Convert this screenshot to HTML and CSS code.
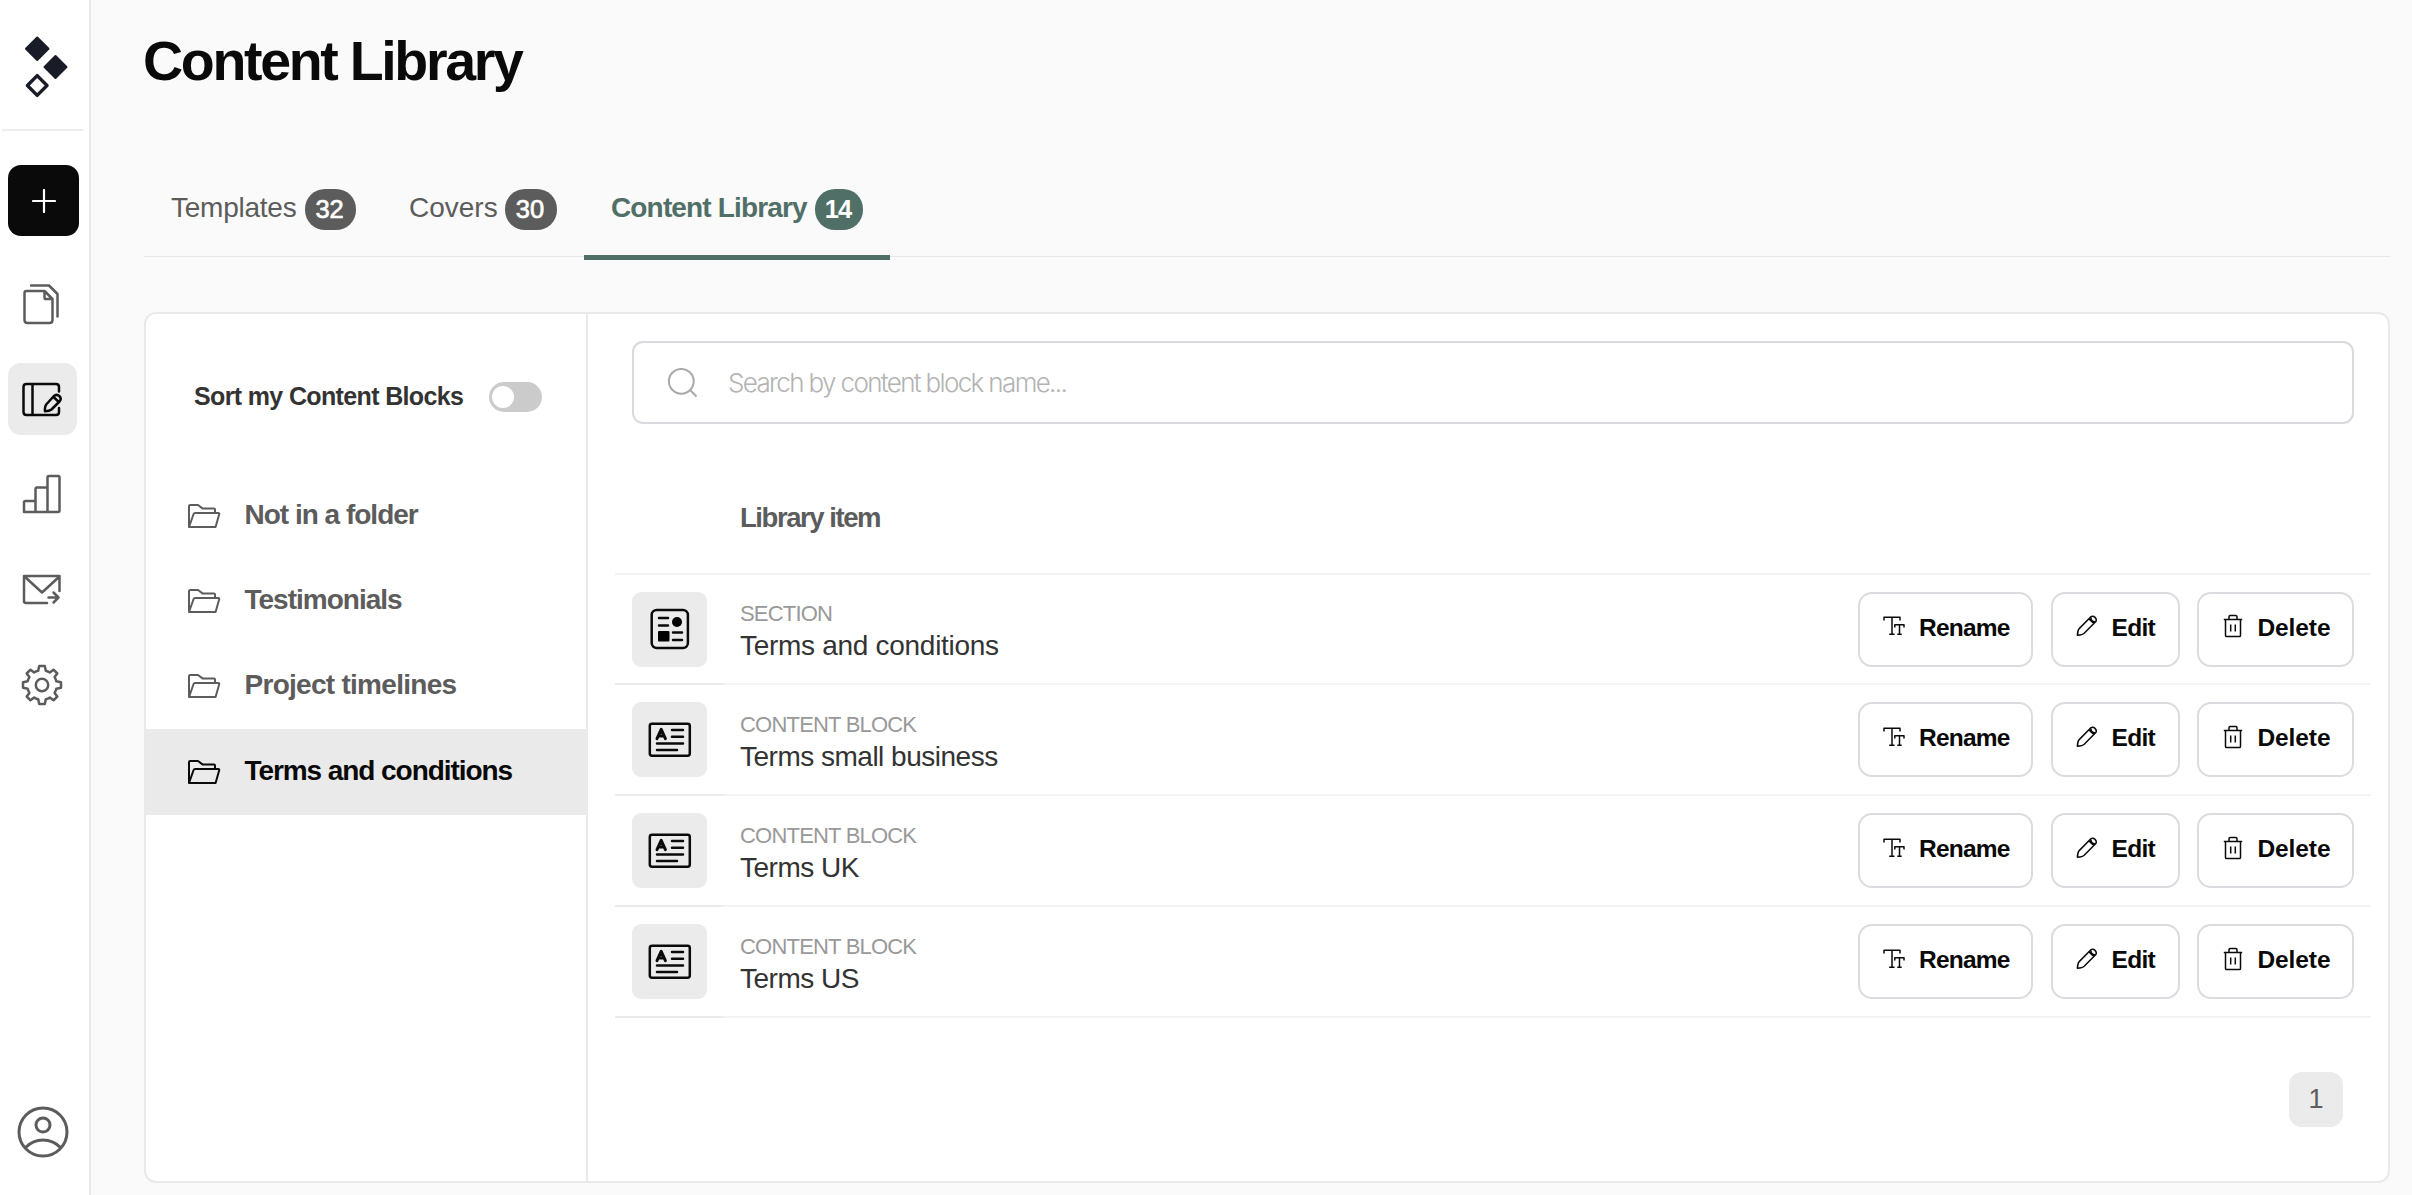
FILE: index.html
```html
<!DOCTYPE html>
<html lang="en">
<head>
<meta charset="utf-8">
<title>Content Library</title>
<link rel="stylesheet" href="styles.css">
</head>
<body>
<svg class="defs" aria-hidden="true">
  <symbol id="folder" viewBox="0 0 34 26"><path d="M2 24V3.2Q2 2 3.2 2H11L15.5 5.4H27Q28 5.4 28 6.4V10M2 24L6.6 11Q7 10 8 10H31.2Q32.6 10 32.2 11.3L28.6 24Z"/></symbol>
  <symbol id="section" viewBox="0 0 40 42"><rect x="1.7" y="2" width="36.2" height="38" rx="5" fill="none" stroke="currentColor" stroke-width="2.5"/><path d="M9 10H18M9 17.5H18M23 24.5H32M23 32H32" fill="none" stroke="currentColor" stroke-width="2.5" stroke-linecap="round"/><circle cx="27" cy="14" r="5"/><rect x="8" y="23" width="11.5" height="10.6" rx="1"/></symbol>
  <symbol id="block" viewBox="0 0 44 36"><g fill="none" stroke="currentColor" stroke-width="2.5" stroke-linecap="round" stroke-linejoin="round"><rect x="1.8" y="1.8" width="40" height="32" rx="2.2"/><path d="M24 8H35M24 14.7H35M9 21.4H35M9 28.1H29"/><path d="M9 16.6L13.2 7.4L17.4 16.6M10.8 14H15.8" stroke-width="3"/></g></symbol>
  <symbol id="rename" viewBox="0 0 22 20"><path d="M1 4.5V1.2H17V4.5M9 1.2V18.2M6.2 18.2H11.5M11.8 11.5V8.8H21V11.5M16.5 8.8V18.2M14.3 18.2H18.7"/></symbol>
  <symbol id="pencil" viewBox="0 0 22 22"><path d="M14.4 2.2Q16.8 .2 19 2.4Q21.2 4.6 19.6 6.8L8.2 18.2Q6.5 19.8 1.4 20.2Q1.6 15.4 3.2 13.6ZM13 3.9L18 8.7M15 2.8Q14.8 6.4 19.2 7"/></symbol>
  <symbol id="trash" viewBox="0 0 20 24"><path d="M.8 5.4H19.2M2.5 5.4V21.4Q2.5 22.6 3.7 22.6H16.3Q17.5 22.6 17.5 21.4V5.4M6 5.2V2.8Q6 1.6 7.2 1.6H12.8Q14 1.6 14 2.8V5.2M7.7 10.5V17.5M12.3 10.5V17.5"/></symbol>
</svg>
<div class="app">
  <nav class="rail">
    <svg class="logo" viewBox="0 0 44 62"><g fill="#191b26" stroke="#191b26" stroke-width="2" stroke-linejoin="round"><path d="M13.2 1.5L24.5 12.7L13.2 24L2 12.7ZM31.5 20L42.5 31L31.5 42L20.5 31Z"/></g><path d="M13.2 39.600L23 49.500L13.2 59.400L3.400 49.500Z" class="hollow"/></svg>
    <div class="rule"></div>
    <a class="add"><svg viewBox="0 0 24 24"><path d="M12 1V23M1 12H23"/></svg></a>
    <a class="item"><svg viewBox="0 0 40 44"><path d="M9 3.5H27L35.5 12V34.5M4.5 9H22.5L30.5 17V38Q30.5 41 27.5 41H5.500Q2.500 41 2.500 38V11Q2.500 9 4.500 9ZM22.500 9V15.400Q22.500 17 24 17H30.500"/></svg></a>
    <a class="item on"><svg viewBox="0 0 42 40"><path d="M38 12.500V8Q38 5 35 5H5.500Q2.500 5 2.500 8V33Q2.500 36 5.500 36H35Q38 36 38 33V29M11.500 5V36M32.500 17.500Q35.500 14.500 38.300 17Q41 19.500 38.500 22.500L30.500 30.500Q28.500 32.300 24 32.300Q23.500 28 25.200 25.500ZM32.500 18L37.800 23"/></svg></a>
    <a class="item"><svg viewBox="0 0 40 40"><path d="M2 38V28.500Q2 27 3.500 27H13.500V15Q13.500 13.500 15 13.500H25.500V3.500Q25.500 2 27 2H36Q37.500 2 37.500 3.500V36.500Q37.500 38 36 38ZM13.500 27V38M25.500 13.500V38"/></svg></a>
    <a class="item"><svg viewBox="0 0 40 40"><path d="M37.500 21V6H2V31Q2 33 4 33H25M2.500 6.500L20 22.500L37.500 6.500M26.500 27.500H36.500M31.500 22.500L36.500 27.500L31.500 32.500"/></svg></a>
    <a class="item"><svg viewBox="-21 -21 42 42"><circle r="6.200"/><path d="M-2.800 -19H2.800L3.800 -14.300Q6 -13.800 7.900 -12.500L11.500 -15.300L15.300 -11.500L12.600 -7.900Q13.800 -6 14.300 -3.800L19 -2.800V2.800L14.300 3.800Q13.800 6 12.600 7.900L15.300 11.500L11.500 15.300L7.900 12.600Q6 13.800 3.800 14.300L2.800 19H-2.800L-3.800 14.300Q-6 13.800 -7.900 12.600L-11.500 15.300L-15.300 11.500L-12.600 7.900Q-13.800 6 -14.300 3.800L-19 2.800V-2.800L-14.300 -3.800Q-13.800 -6 -12.600 -7.900L-15.300 -11.500L-11.500 -15.300L-7.900 -12.600Q-6 -13.800 -3.800 -14.300Z"/></svg></a>
    <svg class="user" viewBox="0 0 52 52"><circle cx="26" cy="26" r="24"/><circle cx="26" cy="19" r="7"/><path d="M8.500 41.500Q16 34 26 34T43.500 41.500"/></svg>
  </nav>
  <main class="main">
    <h1>Content Library</h1>
    <div class="tabs">
      <a class="tab t1"><span>Templates</span><b>32</b></a>
      <a class="tab t2"><span>Covers</span><b>30</b></a>
      <a class="tab t3"><span>Content Library</span><b>14</b></a>
    </div>
    <div class="panel">
      <aside class="folders">
        <div class="sort"><span>Sort my Content Blocks</span><i class="toggle"></i></div>
        <a class="folder"><svg><use href="#folder"/></svg><span>Not in a folder</span></a>
        <a class="folder"><svg><use href="#folder"/></svg><span>Testimonials</span></a>
        <a class="folder wide"><svg><use href="#folder"/></svg><span>Project timelines</span></a>
        <a class="folder active"><svg><use href="#folder"/></svg><span>Terms and conditions</span></a>
      </aside>
      <section class="content">
        <div class="search"><svg viewBox="0 0 32 32"><circle cx="14.300" cy="14.300" r="12.400"/><path d="M23 23L29.500 29.500"/></svg><span>Search by content block name...</span></div>
        <div class="table">
          <div class="head">Library item</div>
          <div class="row first"><div class="cell"><div class="tile"><svg class="sec"><use href="#section"/></svg></div></div><div class="info"><small>SECTION</small><span>Terms and conditions</span></div><div class="acts"><a class="btn ren"><svg><use href="#rename"/></svg><span>Rename</span></a><a class="btn edi"><svg><use href="#pencil"/></svg><span>Edit</span></a><a class="btn del"><svg><use href="#trash"/></svg><span>Delete</span></a></div></div>
          <div class="row"><div class="cell"><div class="tile"><svg class="blk"><use href="#block"/></svg></div></div><div class="info"><small>CONTENT BLOCK</small><span>Terms small business</span></div><div class="acts"><a class="btn ren"><svg><use href="#rename"/></svg><span>Rename</span></a><a class="btn edi"><svg><use href="#pencil"/></svg><span>Edit</span></a><a class="btn del"><svg><use href="#trash"/></svg><span>Delete</span></a></div></div>
          <div class="row"><div class="cell"><div class="tile"><svg class="blk"><use href="#block"/></svg></div></div><div class="info"><small>CONTENT BLOCK</small><span>Terms UK</span></div><div class="acts"><a class="btn ren"><svg><use href="#rename"/></svg><span>Rename</span></a><a class="btn edi"><svg><use href="#pencil"/></svg><span>Edit</span></a><a class="btn del"><svg><use href="#trash"/></svg><span>Delete</span></a></div></div>
          <div class="row"><div class="cell"><div class="tile"><svg class="blk"><use href="#block"/></svg></div></div><div class="info"><small>CONTENT BLOCK</small><span>Terms US</span></div><div class="acts"><a class="btn ren"><svg><use href="#rename"/></svg><span>Rename</span></a><a class="btn edi"><svg><use href="#pencil"/></svg><span>Edit</span></a><a class="btn del"><svg><use href="#trash"/></svg><span>Delete</span></a></div></div>
        </div>
        <div class="pager"><span>1</span></div>
      </section>
    </div>
  </main>
</div>
</body>
</html>
```
FILE: styles.css
```css
*{box-sizing:border-box}
body{margin:0;background:#fafafa;font-family:"Liberation Sans",Arial,sans-serif;color:#0a0a0a;white-space:nowrap}
.defs{display:none}
svg{display:block;flex:none}
.app{display:flex;height:1195px;overflow:hidden}
.rail{width:91px;flex:none;background:#fff;border-right:2px solid #e9e9e9;display:flex;flex-direction:column;padding-bottom:37px}
.rail svg{fill:none;stroke:#5c5c5c;stroke-width:2.5;stroke-linecap:round;stroke-linejoin:round}
.rail .logo{width:44px;height:62px;margin:36px 0 0 24px}
.logo .hollow{fill:none;stroke:#191b26;stroke-width:3.4;stroke-linejoin:round}
.rule{height:2px;width:81px;margin:31px 0 34px 2px;background:#ededf1}
.add{width:71px;height:71px;margin-left:8px;border-radius:13px;background:#0a0a0a;display:flex;align-items:center;justify-content:center}
.rail .add svg{width:24px;height:24px;stroke:#fff;stroke-width:2.2}
.item{width:69px;height:72px;margin:23.2px 0 0 8px;padding-right:1px;border-radius:13px;display:flex;align-items:center;justify-content:center}
.add + .item{margin-top:32px}
.item svg{width:40px;height:40px}
.item:nth-of-type(2) svg{width:40px;height:44px}
.item:nth-of-type(6) svg{width:42px;height:42px}
.item.on{background:#ebebeb}
.item.on svg{width:42px;height:40px;stroke:#0a0a0a}
.rail .user{width:52px;height:52px;margin:auto 0 0 16.500px;stroke-width:3}
.main{flex:1;min-width:0;padding:0 22px 0 53px}
h1{margin:0;padding:1px 0 39px;text-indent:-1px;font-size:55.500px;line-height:120px;font-weight:700;letter-spacing:-2.300px}
.tabs{height:97px;display:flex;border-bottom:1px solid #e8e8e8}
.tab{height:100px;padding:4px 27px 0;border-bottom:5px solid transparent;display:flex;align-items:center;font-size:28px;color:#5c5c5c}
.tab span{margin-bottom:3px}
.tab b{margin-left:auto;height:41px;padding-right:2px;border-radius:20px;background:#5c5c5c;color:#fff;font-size:25.5px;line-height:41px;font-weight:400;text-align:center;-webkit-text-stroke:.7px #fff}
.t1{width:239px;letter-spacing:-.24px}
.t1 b{width:51px}
.t2{width:201px;padding-left:26px}
.t2 b{width:52px}
.t3{width:306px;color:#506f67;font-weight:700;letter-spacing:-.85px;border-color:#506f67}
.t3 b{width:48px;background:#506f67;font-weight:700;-webkit-text-stroke:0}
.panel{height:871px;margin-top:55px;border:2px solid #e9e9e9;border-radius:12px;background:#fff;display:flex;overflow:hidden}
.folders{width:442px;flex:none;border-right:2px solid #e9e9e9;padding-top:53px}
.sort{height:60px;margin-bottom:46px;padding:0 44px 0 48px;display:flex;align-items:center;justify-content:space-between;font-size:25px;font-weight:700;letter-spacing:-.64px;color:#333}
.sort span{padding-bottom:2px}
.toggle{width:53px;height:30px;border-radius:15px;background:#cbcbcb;padding:4px 3px}
.toggle::before{content:"";display:block;width:22px;height:22px;border-radius:50%;background:#fff}
.folder{height:85.33px;padding-left:41px;display:flex;align-items:center;gap:23.500px;color:#5c5c5c;font-size:28px;font-weight:700;letter-spacing:-1px}
.folder span{padding-bottom:2px}
.folder svg{width:34px;height:26px;fill:none;stroke:currentColor;stroke-width:2;stroke-linejoin:round}
.wide{letter-spacing:-.72px}
.active{height:86px;background:#eaeaea;color:#0a0a0a;letter-spacing:-1.070px}
.content{flex:1;min-width:0}
.search{height:83px;margin:27px 34px 0 44px;border:2px solid #dadade;border-radius:11px;padding-left:33px;display:flex;align-items:center;gap:29px;font:300 26px Inter,sans-serif;letter-spacing:-1.65px;color:#b3b3b3}
.search svg{width:32px;height:32px;fill:none;stroke:#a9a9a9;stroke-width:2}
.search span{padding-bottom:1px}
.table{margin:0 17px 0 27px}
.head{height:151px;padding:38px 0 0 125px;border-bottom:2px solid #f3f3f3;font-size:27.500px;line-height:111px;font-weight:700;letter-spacing:-1.450px;color:#5c5c5c}
.row{height:111px;display:flex;border-bottom:2px solid #f3f3f3}
.first{height:110px}
.cell{width:109px;margin-bottom:-2px;padding-left:17px;border-bottom:2px solid #ebebeb;display:flex;align-items:center}
.tile{width:75px;height:75px;border-radius:9px;background:#ebebeb;display:flex;align-items:center;justify-content:center}
.sec{width:40px;height:42px}
.blk{width:44px;height:36px}
.info{flex:1;padding:2px 0 0 16px;display:flex;flex-direction:column;justify-content:center}
.info small{font-size:22px;line-height:32px;letter-spacing:-.8px;color:#999}
.info span{font-size:28px;line-height:32px;letter-spacing:-.500px;color:#333}
.first .info span{letter-spacing:-.29px}
.acts{display:flex;align-items:center;padding-right:17px;gap:17.500px}
.btn{height:75px;border:2px solid #dcdce0;border-radius:14px;padding:0 0 5px 23px;display:flex;align-items:center;font-size:24.500px;font-weight:700}
.btn span{padding-top:2px}
.btn svg{fill:none;stroke:currentColor;stroke-width:1.5;stroke-linejoin:round;margin-bottom:1px}
.ren{width:175px;letter-spacing:-.8px;gap:14px}
.ren svg{width:22px;height:20px}
.edi{width:129px;letter-spacing:-.7px;gap:14px}
.edi svg{width:22px;height:22px}
.del{width:157px;letter-spacing:-.1px;gap:15px;padding-left:23.500px}
.del svg{width:20px;height:24px}
.pager{display:flex;justify-content:flex-end;padding:54px 45px 0 0}
.pager span{width:54px;height:55px;border-radius:13px;background:#ebebeb;color:#5c5c5c;font-size:27px;line-height:54px;text-align:center}
```
